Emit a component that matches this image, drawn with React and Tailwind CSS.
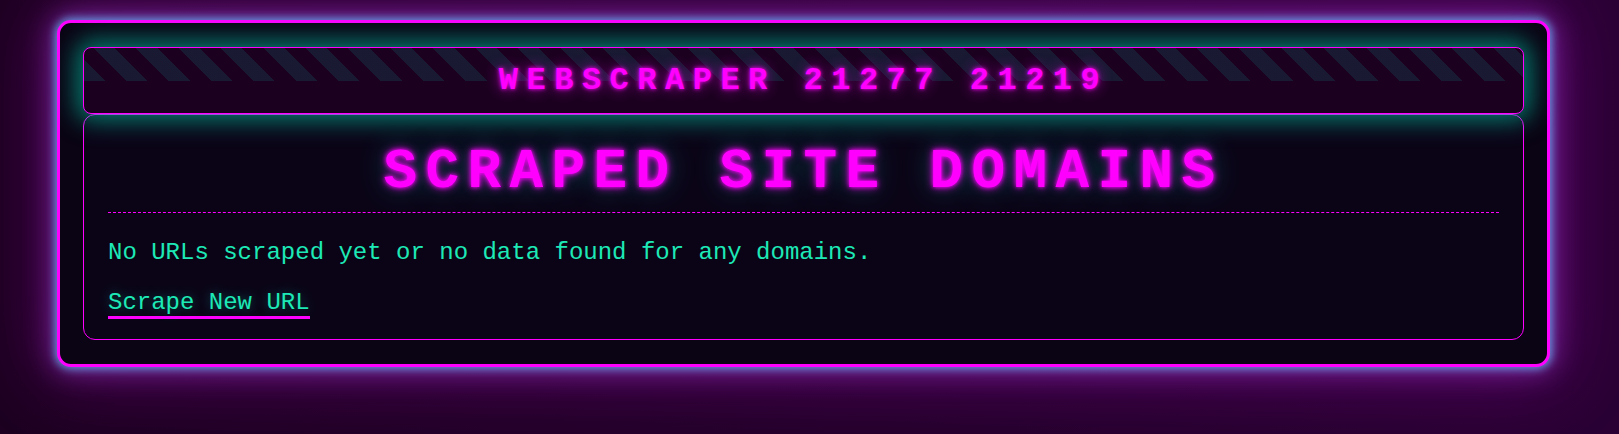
// Neon scraper panel: glowing outer frame, striped title bar, domains box.
export default function App() {
  return (
    <div className="min-h-screen bg-gradient-to-r from-[#1d0021] to-[#2a0034] pt-5 pl-[57px] [font-family:'Courier_New',Courier,'Nimbus_Mono_PS','Liberation_Mono',monospace]">
      <div className="w-[1493px] rounded-[14px] border-[3px] border-[#ff00ff] bg-[#0a0414] px-[23px] py-6 shadow-[0_0_8px_2px_rgba(100,180,245,0.8),0_0_26px_6px_rgba(160,60,210,0.55),0_0_70px_12px_rgba(180,0,200,0.35)]">
        <header className="relative flex h-[67px] items-center justify-center overflow-hidden rounded-lg border border-[#ff00ff] bg-[#1c0020] shadow-[0_0_24px_6px_rgba(0,210,175,0.6)]">
          <div className="absolute inset-x-0 top-0 h-1/2 [background-image:repeating-linear-gradient(45deg,rgba(0,230,200,0.11)_0px,rgba(0,230,200,0.11)_15px,transparent_15px,transparent_30px)]" />
          <h1 className="relative text-[32px] font-bold leading-[36px] tracking-[8.5px] text-[#ff00ff] [text-shadow:0_0_4px_#ff00ff,0_0_14px_rgba(255,0,255,0.65)]">
            WEBSCRAPER 21277 21219
          </h1>
        </header>

        <section className="rounded-xl border border-[#ff00ff] bg-[#0b0417] px-6 pt-[25px] pb-5">
          <h2 className="border-b border-dashed border-[#ff00ff] pb-2 text-center text-[56px] font-bold leading-[64px] tracking-[8.4px] text-[#ff00ff] [text-shadow:0_0_4px_#ff00ff,0_0_10px_rgba(255,0,255,0.8),0_0_28px_rgba(0,255,220,0.35)]">
            SCRAPED SITE DOMAINS
          </h2>
          <p className="mt-[26px] text-[24px] leading-[27px] text-[#1de9b6]">
            No URLs scraped yet or no data found for any domains.
          </p>
          <a
            href="#"
            className="mt-[23px] block w-fit border-b-[3px] border-[#ff00ff] text-[24px] leading-[27px] text-[#1de9b6] [text-shadow:0_0_12px_rgba(0,255,200,0.35)]"
          >
            Scrape New URL
          </a>
        </section>
      </div>
    </div>
  )
}
